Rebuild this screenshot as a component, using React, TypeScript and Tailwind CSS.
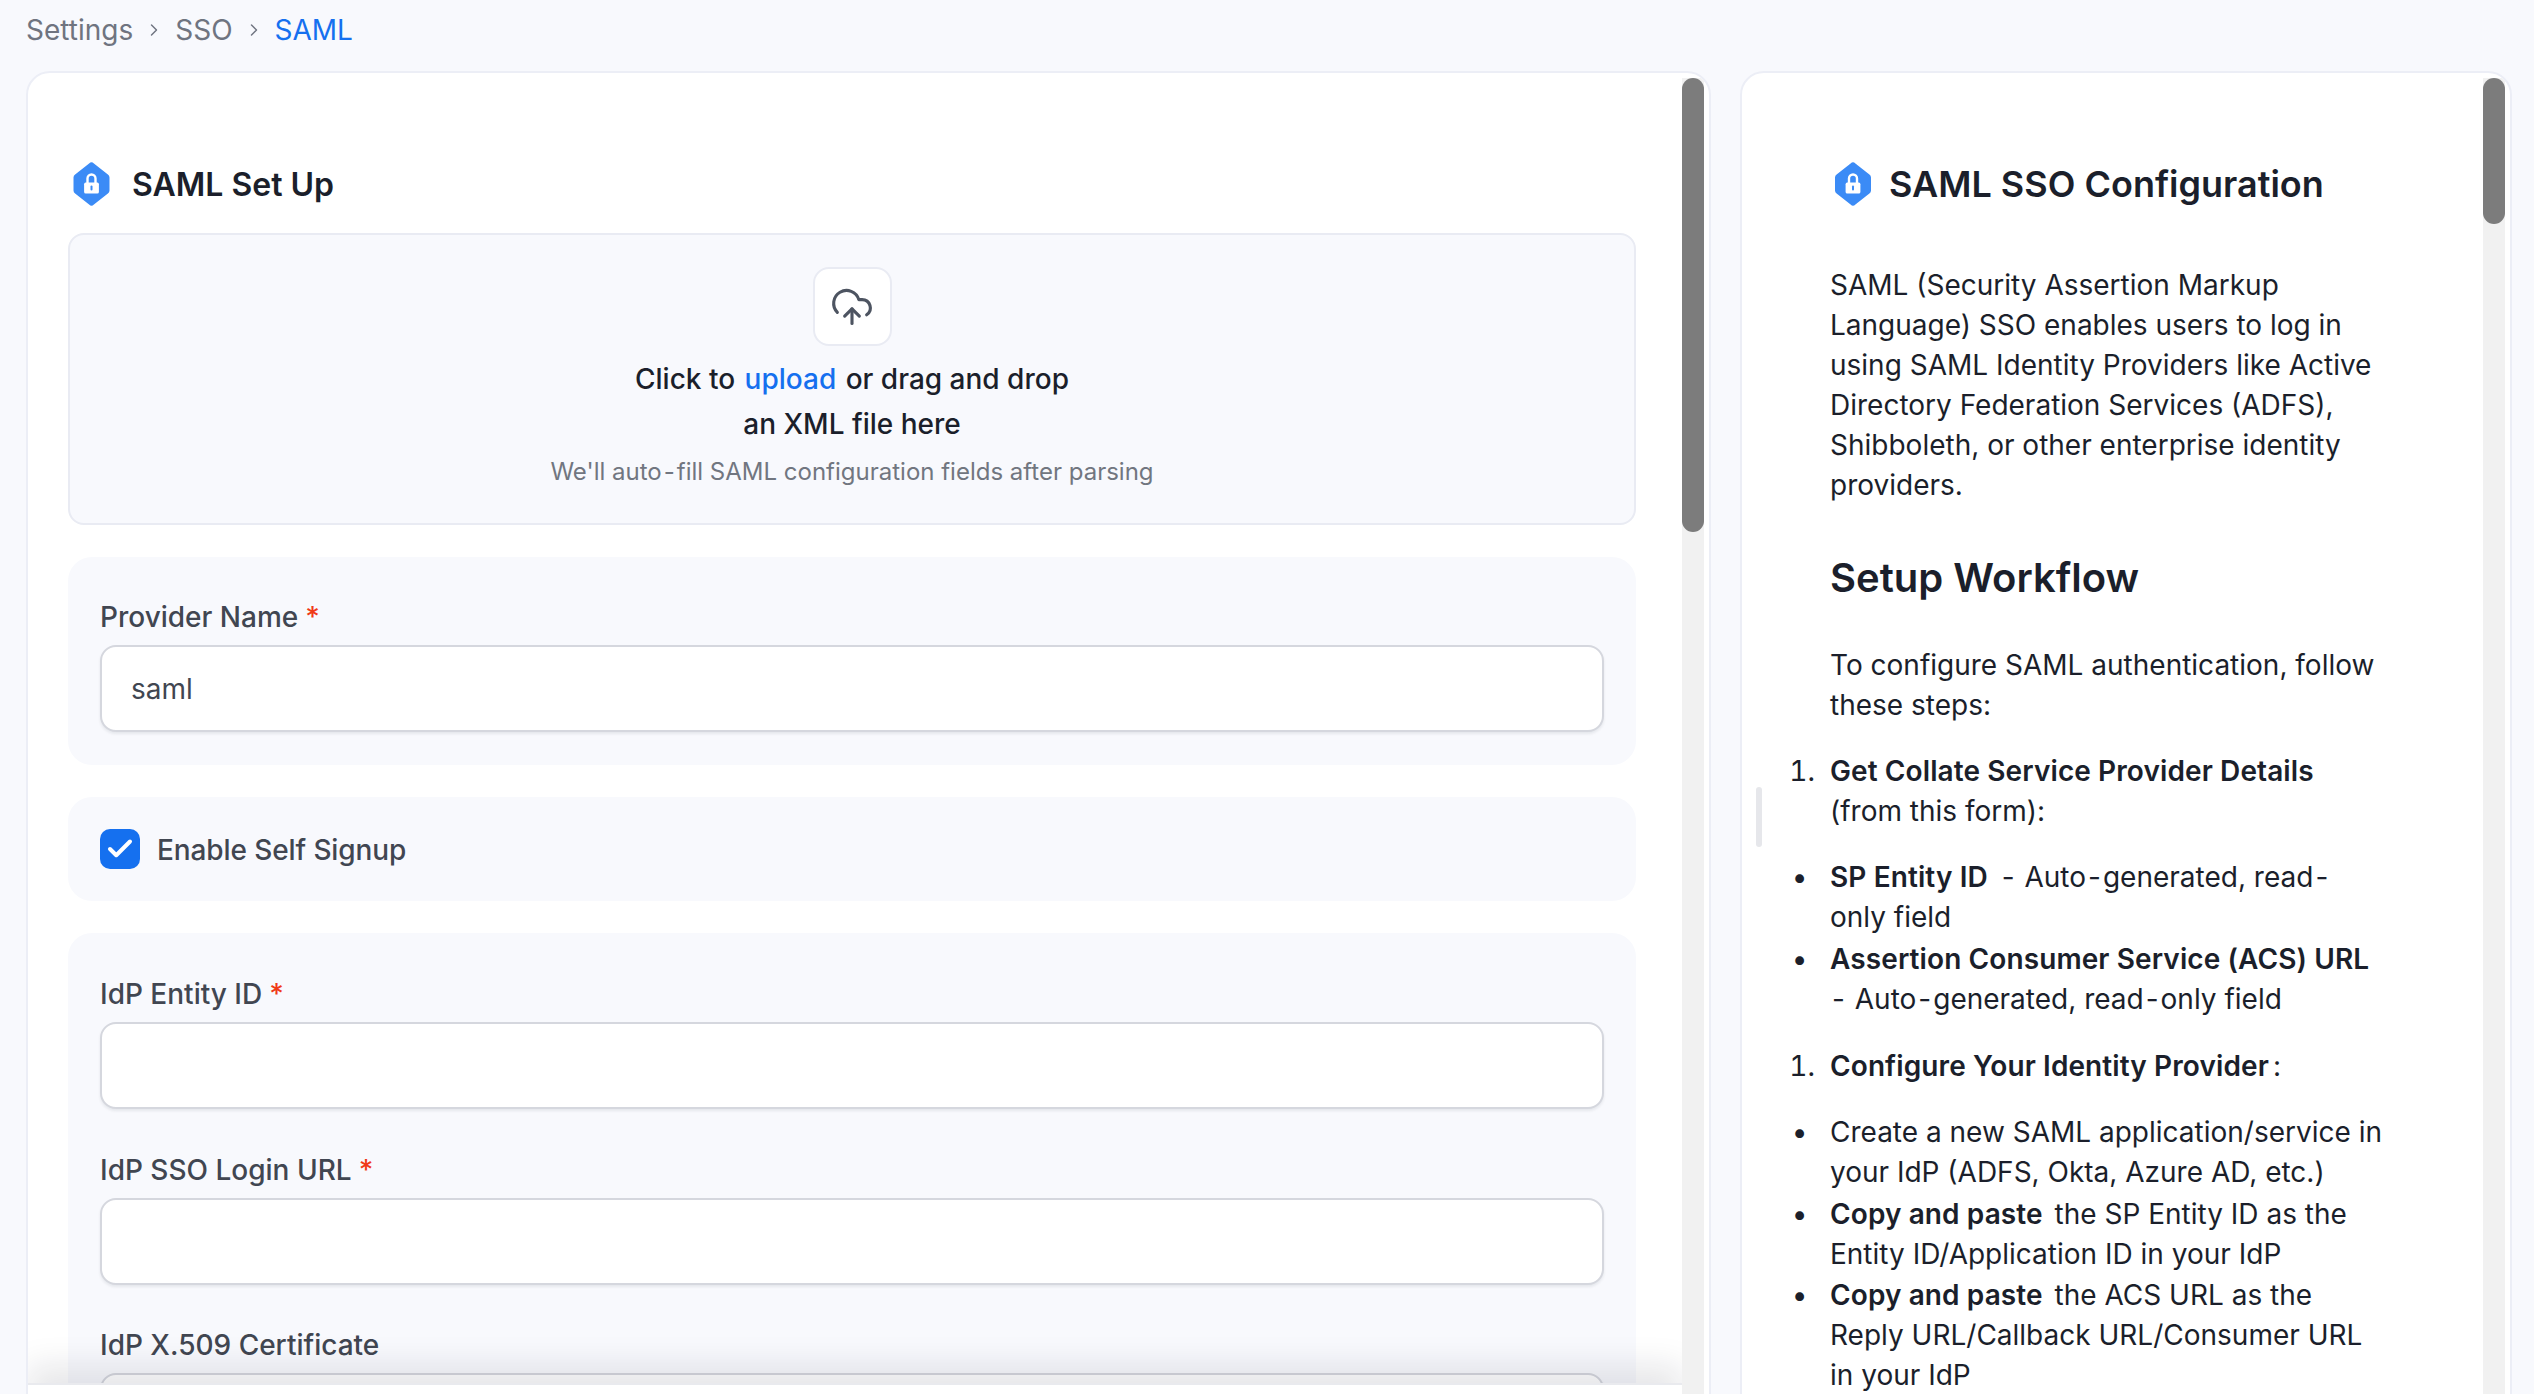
import { ChevronRight, CloudUpload, Check } from "lucide-react";

function LockBadge({ className }: { className: string }) {
  return (
    <svg viewBox="0 0 36 44" className={className} aria-hidden="true">
      <path
        d="M15.6 1.4a3.4 3.4 0 0 1 4.8 0l14 11a3.6 3.6 0 0 1 1.6 3v13.2a3.6 3.6 0 0 1-1.6 3l-14 11a3.4 3.4 0 0 1-4.8 0l-14-11A3.6 3.6 0 0 1 0 28.6V15.4a3.6 3.6 0 0 1 1.6-3z"
        fill="#3b8bf6"
      />
      <path d="M14 22v-5.5a4 4 0 0 1 8 0V22" fill="none" stroke="#fff" strokeWidth="2.4" />
      <rect x="10.6" y="20.6" width="14.8" height="11" rx="1.6" fill="#fff" />
      <rect x="17" y="23.4" width="2" height="5" rx="1" fill="#3b8bf6" />
    </svg>
  );
}

// the hyphen in the reference sits wider than the installed Inter draws it
function Hy() {
  return <span className="mx-[2px]">-</span>;
}

function B({ children }: { children: React.ReactNode }) {
  return <strong className="font-semibold tracking-[0.1px] mr-[4px]">{children}</strong>;
}

function Field({ label, required, value }: { label: string; required?: boolean; value?: string }) {
  return (
    <div className="mb-[40.5px]">
      <label className="block text-[28px] leading-[40px] font-medium text-[#414651] mb-[8px]">
        {label}
        {required && <span className="text-[#f03a17] ml-[7px]">*</span>}
      </label>
      <div className="h-[87px] rounded-[16px] bg-white border-2 border-[#d5d7de] shadow-[0_2px_3px_rgba(16,24,40,0.08)] flex items-center px-[29px] text-[28px] text-[#414651]">
        {value}
      </div>
    </div>
  );
}

function Scrollbar({ thumb }: { thumb: string }) {
  return (
    <div className="w-[22px] shrink-0 mt-[5px] mr-[5px] bg-[#f1f1f1]">
      <div className={`${thumb} w-full rounded-full bg-[#7c7c7c]`}></div>
    </div>
  );
}

export default function App() {
  return (
    <div
      className="h-[1394px] overflow-hidden bg-[#f8f9fd] flex flex-col px-[26px] text-[#1b1f2b]"
      style={{ fontFamily: "Inter, 'Liberation Sans', sans-serif" }}
    >
      {/* Breadcrumb */}
      <nav className="h-[71px] shrink-0 pb-[11px] flex items-center gap-[11px] text-[28px] text-[#6f7480]">
        <span>Settings</span>
        <ChevronRight size={20} strokeWidth={1.75} />
        <span>SSO</span>
        <ChevronRight size={20} strokeWidth={1.75} />
        <span className="text-[#1570ef]">SAML</span>
      </nav>

      <div className="flex gap-[29px] h-[1400px] shrink-0 w-[2486px]">
        {/* Form */}
        <div className="w-[1685px] shrink-0 bg-white border-2 border-[#eceef6] rounded-[24px] flex overflow-hidden">
          <div className="relative flex-1 min-w-0 overflow-hidden">
            <div className="pl-[40px] pr-[46px] pt-[89px]">
              <div className="flex items-center gap-[22px] h-[44px] pl-[5px] mb-[27px]">
                <LockBadge className="w-[37px] h-[44px]" />
                <h2 className="text-[32px] font-semibold text-[#1b1f2b] pt-[2px]">SAML Set Up</h2>
              </div>

              <div className="h-[292px] mb-[32px] rounded-[16px] bg-[#f8f9fd] border-2 border-[#e9ebf3] flex flex-col items-center pt-[32px]">
                <div className="w-[79px] h-[79px] rounded-[16px] bg-white border-2 border-[#e9ebf3] flex items-center justify-center text-[#4d5461]">
                  <CloudUpload size={44} strokeWidth={1.7} />
                </div>
                <p className="mt-[11px] text-[28px] leading-[45px] font-medium text-[#1b1f2b] text-center">
                  Click to <span className="text-[#1570ef] mx-[2px]">upload</span> or drag and drop
                  <br />
                  an XML file here
                </p>
                <p className="mt-[5px] text-[24px] leading-[40px] text-[#717680]">
                  We'll auto<Hy />fill SAML configuration fields after parsing
                </p>
              </div>

              <div className="rounded-[24px] bg-[#f8f9fd] px-[32px] pt-[40px] mb-[32px] h-[208px]">
                <Field label="Provider Name" required value="saml" />
              </div>

              <div className="rounded-[24px] bg-[#f8f9fd] h-[104px] px-[32px] flex items-center gap-[17px] mb-[32px]">
                <div className="w-[40px] h-[40px] rounded-[10px] bg-[#1570ef] flex items-center justify-center text-white">
                  <Check size={30} strokeWidth={3.2} />
                </div>
                <span className="text-[28px] font-medium text-[#414651] -tracking-[0.1px] pt-[1px]">Enable Self Signup</span>
              </div>

              <div className="rounded-[24px] bg-[#f8f9fd] px-[32px] pt-[41px]">
                <Field label="IdP Entity ID" required />
                <Field label="IdP SSO Login URL" required />
                <Field label="IdP X.509 Certificate" />
              </div>
            </div>

            {/* Sticky footer */}
            <div className="absolute left-0 right-0 top-[1310px] h-[80px] bg-white border-t-2 border-[#e9eaee] shadow-[0_-18px_32px_rgba(16,24,40,0.1)]"></div>
          </div>
          <Scrollbar thumb="h-[454px]" />
        </div>

        {/* Docs */}
        <div className="w-[772px] shrink-0 bg-white border-2 border-[#eceef6] rounded-[24px] flex overflow-hidden relative">
          {/* Resize handle */}
          <div className="absolute left-[14px] top-[714px] w-[6px] h-[60px] rounded-full bg-[#e6e7eb]"></div>

          <div className="flex-1 min-w-0 pl-[88px] pr-[32px] pt-[89px] text-[28px] leading-[40px] text-[#1b1f2b]">
            <div className="flex items-center gap-[18px] h-[44px] pl-[5px] mb-[59px]">
              <LockBadge className="w-[36px] h-[44px]" />
              <h1 className="text-[36px] font-semibold pb-[1px]">SAML SSO Configuration</h1>
            </div>

            <div className="w-[555px]">
              <p>
                SAML (Security Assertion Markup Language) SSO enables users to log in using SAML Identity Providers like
                Active Directory Federation Services (ADFS), Shibboleth, or other enterprise identity providers.
              </p>

              <h2 className="text-[40px] leading-[56px] font-semibold mt-[45px] mb-[39px]">Setup Workflow</h2>

              <p>To configure SAML authentication, follow these steps:</p>

              <ol className="mt-[26px]">
                <li className="marker:[content:'1.__']">
                  <B>Get Collate Service Provider Details</B> (from this form):
                </li>
              </ol>
              <ul className="mt-[26px]">
                <li className="mb-[2px] marker:[content:'•___']">
                  <B>SP Entity ID</B> <Hy /> Auto<Hy />generated, read<Hy />only field
                </li>
                <li className="marker:[content:'•___']">
                  <B>Assertion Consumer Service (ACS) URL</B> <Hy /> Auto<Hy />generated, read<Hy />only field
                </li>
              </ul>
              <ol className="mt-[27px]">
                <li className="marker:[content:'1.__']">
                  <B>Configure Your Identity Provider</B>:
                </li>
              </ol>
              <ul className="mt-[26px]">
                <li className="mb-[2px] marker:[content:'•___']">
                  Create a new SAML application/service in your IdP (ADFS, Okta, Azure AD, etc.)
                </li>
                <li className="mb-[1px] marker:[content:'•___']">
                  <B>Copy and paste</B> the SP Entity ID as the Entity ID/Application ID in your IdP
                </li>
                <li className="marker:[content:'•___']">
                  <B>Copy and paste</B> the ACS URL as the Reply URL/Callback URL/Consumer URL in your IdP
                </li>
              </ul>
            </div>
          </div>
          <Scrollbar thumb="h-[146px]" />
        </div>
      </div>
    </div>
  );
}
